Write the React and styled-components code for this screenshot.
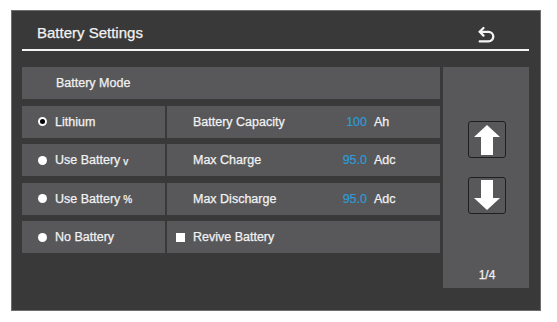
import React from 'react';
import styled, { createGlobalStyle } from 'styled-components';

const GlobalStyle = createGlobalStyle`
  body {
    margin: 0;
    background: #ffffff;
    font-family: "Liberation Sans", Arial, sans-serif;
  }
`;

const Screen = styled.div`
  box-sizing: border-box;
  margin: 10px 0 0 11px;
  width: 530px;
  height: 301px;
  background: #393939;
  border: 1px solid #6e6e6e;
  padding: 0 11px 0 10px;
  color: #f2f2f2;
  -webkit-text-stroke: 0.25px #f2f2f2;
`;

const Header = styled.div`
  display: flex;
  justify-content: space-between;
  align-items: flex-start;
  height: 38px;
  border-bottom: 2px solid #f4f4f4;
`;

const Title = styled.div`
  font-size: 15px;
  line-height: 18px;
  padding: 13px 0 0 15px;
`;

const BackButton = styled.div`
  margin: 15px 34px 0 0;
  width: 17px;
  height: 19px;
`;

const Body = styled.div`
  display: flex;
  gap: 2.5px;
  margin-top: 16px;
`;

const Grid = styled.div`
  width: 418px;
  display: grid;
  grid-template-columns: 143px 1fr;
  grid-auto-rows: 32px;
  column-gap: 2px;
  row-gap: 6.5px;
`;

const Cell = styled.div`
  background: #58585a;
  display: flex;
  align-items: center;
  font-size: 12.5px;
  padding-left: ${p => p.$pad || 0}px;
  grid-column: ${p => (p.$wide ? '1 / span 2' : 'auto')};
`;

const Radio = styled.span`
  box-sizing: border-box;
  width: 9px;
  height: 9px;
  border-radius: 50%;
  background: ${p => (p.$checked ? '#000000' : '#ffffff')};
  border: ${p => (p.$checked ? '2px solid #ffffff' : 'none')};
  margin-right: 8.5px;
  flex-shrink: 0;
`;

const Check = styled.span`
  width: 9px;
  height: 9px;
  background: #ffffff;
  margin-right: 8px;
`;

const Small = styled.span`
  font-size: 10px;
  margin-left: 3px;
  position: relative;
  top: 1px;
`;

const Label = styled.span`
  width: 128px;
`;

const Value = styled.span`
  width: 46px;
  text-align: right;
  color: #2f9ad5;
  -webkit-text-stroke: 0.2px #2f9ad5;
  margin-right: 7px;
`;

const SidePanel = styled.div`
  width: 86px;
  height: 220.5px;
  background: #58585a;
  display: flex;
  flex-direction: column;
  align-items: center;
  padding-top: 54px;
  box-sizing: border-box;
  gap: 19px;
`;

const ArrowButton = styled.div`
  box-sizing: border-box;
  width: 38px;
  height: 37px;
  border: 1px solid #1f1f1f;
  border-radius: 3px;
  margin-left: 3px;
  display: flex;
`;

const PageLabel = styled.div`
  margin-top: auto;
  padding-bottom: 6px;
  font-size: 12px;
  line-height: 14px;
  margin-left: 3px;
`;

const modes = [
  { name: 'Lithium', checked: true },
  { name: 'Use Battery', small: 'v' },
  { name: 'Use Battery', small: '%' },
];

const params = [
  { label: 'Battery Capacity', value: '100', unit: 'Ah' },
  { label: 'Max Charge', value: '95.0', unit: 'Adc' },
  { label: 'Max Discharge', value: '95.0', unit: 'Adc' },
];

const BackIcon = () => (
  <svg width="17" height="19" viewBox="0 0 17 19" fill="none" stroke="#f4f4f4" strokeWidth="2.3" strokeLinecap="round" strokeLinejoin="round">
    <path d="M5.5 2 1.7 5.8 5.5 9.6" />
    <path d="M1.7 5.8h8.8a4.8 4.8 0 0 1 0 9.6H1.7" />
  </svg>
);

const Arrow = ({ down }) => (
  <svg width="36" height="35" viewBox="1 1 36 35">
    <polygon
      fill="#ffffff"
      points={down ? '13,3 25,3 25,21 32,21 19,33 6,21 13,21' : '19,4 32,16 25,16 25,34 13,34 13,16 6,16'}
    />
  </svg>
);

const App = () => (
  <>
    <GlobalStyle />
    <Screen>
      <Header>
        <Title>Battery Settings</Title>
        <BackButton>
          <BackIcon />
        </BackButton>
      </Header>
      <Body>
        <Grid>
          <Cell $wide $pad={34}>Battery Mode</Cell>
          {modes.map((m, i) => (
            <React.Fragment key={i}>
              <Cell $pad={15.5}>
                <Radio $checked={m.checked} />
                {m.name}
                {m.small && <Small>{m.small}</Small>}
              </Cell>
              <Cell $pad={26}>
                <Label>{params[i].label}</Label>
                <Value>{params[i].value}</Value>
                {params[i].unit}
              </Cell>
            </React.Fragment>
          ))}
          <Cell $pad={15.5}>
            <Radio />
            No Battery
          </Cell>
          <Cell $pad={9}>
            <Check />
            Revive Battery
          </Cell>
        </Grid>
        <SidePanel>
          <ArrowButton>
            <Arrow />
          </ArrowButton>
          <ArrowButton>
            <Arrow down />
          </ArrowButton>
          <PageLabel>1/4</PageLabel>
        </SidePanel>
      </Body>
    </Screen>
  </>
);

export default App;
